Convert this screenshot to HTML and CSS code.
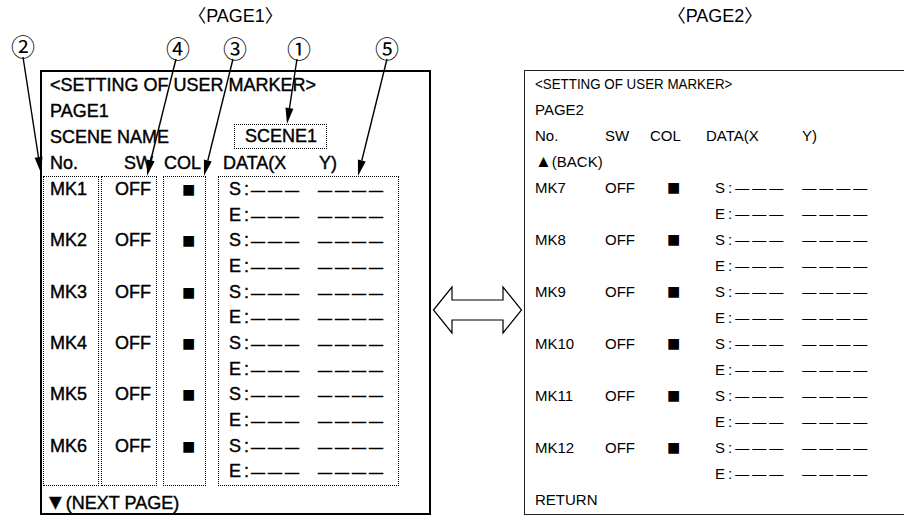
FILE: index.html
```html
<!DOCTYPE html>
<html lang="en">
<head>
<meta charset="utf-8">
<title>Setting of user marker</title>
<link rel="stylesheet" href="styles.css">
</head>
<body>
<div class="stage">
  <div class="titles">
    <div class="title t1"><span class="br">〈</span>PAGE1<span class="br">〉</span></div>
    <div class="title t2"><span class="br">〈</span>PAGE2<span class="br">〉</span></div>
  </div>

  <div class="screens">
    <div class="panel p1">
      <div class="line">&lt;SETTING OF USER MARKER&gt;</div>
      <div class="line">PAGE1</div>
      <div class="line scene"><span class="scene-label">SCENE NAME</span><span class="scene-box">SCENE1</span></div>
      <div class="line head1"><span class="h-no">No.</span><span class="h-sw">SW</span><span class="h-col">COL</span><span class="h-data">DATA(X</span><span>Y)</span></div>
      <div class="cols">
        <div class="col c-no">
          <div class="cell">MK1</div><div class="cell"></div>
          <div class="cell">MK2</div><div class="cell"></div>
          <div class="cell">MK3</div><div class="cell"></div>
          <div class="cell">MK4</div><div class="cell"></div>
          <div class="cell">MK5</div><div class="cell"></div>
          <div class="cell">MK6</div><div class="cell"></div>
        </div>
        <div class="col c-sw">
          <div class="cell">OFF</div><div class="cell"></div>
          <div class="cell">OFF</div><div class="cell"></div>
          <div class="cell">OFF</div><div class="cell"></div>
          <div class="cell">OFF</div><div class="cell"></div>
          <div class="cell">OFF</div><div class="cell"></div>
          <div class="cell">OFF</div><div class="cell"></div>
        </div>
        <div class="col c-col">
          <div class="cell"><span class="sq">■</span></div><div class="cell"></div>
          <div class="cell"><span class="sq">■</span></div><div class="cell"></div>
          <div class="cell"><span class="sq">■</span></div><div class="cell"></div>
          <div class="cell"><span class="sq">■</span></div><div class="cell"></div>
          <div class="cell"><span class="sq">■</span></div><div class="cell"></div>
          <div class="cell"><span class="sq">■</span></div><div class="cell"></div>
        </div>
        <div class="col c-data">
          <div class="cell"><span class="k">S</span><span class="cl">:</span><span class="dash">———</span><span class="dash g2">————</span></div>
          <div class="cell"><span class="k">E</span><span class="cl">:</span><span class="dash">———</span><span class="dash g2">————</span></div>
          <div class="cell"><span class="k">S</span><span class="cl">:</span><span class="dash">———</span><span class="dash g2">————</span></div>
          <div class="cell"><span class="k">E</span><span class="cl">:</span><span class="dash">———</span><span class="dash g2">————</span></div>
          <div class="cell"><span class="k">S</span><span class="cl">:</span><span class="dash">———</span><span class="dash g2">————</span></div>
          <div class="cell"><span class="k">E</span><span class="cl">:</span><span class="dash">———</span><span class="dash g2">————</span></div>
          <div class="cell"><span class="k">S</span><span class="cl">:</span><span class="dash">———</span><span class="dash g2">————</span></div>
          <div class="cell"><span class="k">E</span><span class="cl">:</span><span class="dash">———</span><span class="dash g2">————</span></div>
          <div class="cell"><span class="k">S</span><span class="cl">:</span><span class="dash">———</span><span class="dash g2">————</span></div>
          <div class="cell"><span class="k">E</span><span class="cl">:</span><span class="dash">———</span><span class="dash g2">————</span></div>
          <div class="cell"><span class="k">S</span><span class="cl">:</span><span class="dash">———</span><span class="dash g2">————</span></div>
          <div class="cell"><span class="k">E</span><span class="cl">:</span><span class="dash">———</span><span class="dash g2">————</span></div>
        </div>
      </div>
      <div class="line foot"><span class="tri">▼</span>(NEXT PAGE)</div>
    </div>

    <svg class="swap" viewBox="0 0 93 445" width="93" height="445" aria-hidden="true">
      <path d="M2.5 240 L21 217 L21 230 L72 230 L72 217 L90.5 240 L72 263 L72 250 L21 250 L21 263 Z" fill="#fff" stroke="#000" stroke-width="1.2" stroke-linejoin="miter"/>
    </svg>

    <div class="panel p2">
      <div class="line"><span class="ttl2">&lt;SETTING OF USER MARKER&gt;</span></div>
      <div class="line">PAGE2</div>
      <div class="line row2 hdr2"><span class="r-a">No.</span><span class="r-b">SW</span><span class="r-h">COL</span><span class="r-d">DATA(X</span><span>Y)</span></div>
      <div class="line"><span class="tri2">▲</span>(BACK)</div>
      <div class="line row2"><span class="r-a">MK7</span><span class="r-b">OFF</span><span class="r-c"><span class="sq">■</span></span><span class="k">S</span><span class="cl">:</span><span class="dash">———</span><span class="dash g2">————</span></div>
      <div class="line row2"><span class="r-a"></span><span class="r-b"></span><span class="r-c"></span><span class="k">E</span><span class="cl">:</span><span class="dash">———</span><span class="dash g2">————</span></div>
      <div class="line row2"><span class="r-a">MK8</span><span class="r-b">OFF</span><span class="r-c"><span class="sq">■</span></span><span class="k">S</span><span class="cl">:</span><span class="dash">———</span><span class="dash g2">————</span></div>
      <div class="line row2"><span class="r-a"></span><span class="r-b"></span><span class="r-c"></span><span class="k">E</span><span class="cl">:</span><span class="dash">———</span><span class="dash g2">————</span></div>
      <div class="line row2"><span class="r-a">MK9</span><span class="r-b">OFF</span><span class="r-c"><span class="sq">■</span></span><span class="k">S</span><span class="cl">:</span><span class="dash">———</span><span class="dash g2">————</span></div>
      <div class="line row2"><span class="r-a"></span><span class="r-b"></span><span class="r-c"></span><span class="k">E</span><span class="cl">:</span><span class="dash">———</span><span class="dash g2">————</span></div>
      <div class="line row2"><span class="r-a">MK10</span><span class="r-b">OFF</span><span class="r-c"><span class="sq">■</span></span><span class="k">S</span><span class="cl">:</span><span class="dash">———</span><span class="dash g2">————</span></div>
      <div class="line row2"><span class="r-a"></span><span class="r-b"></span><span class="r-c"></span><span class="k">E</span><span class="cl">:</span><span class="dash">———</span><span class="dash g2">————</span></div>
      <div class="line row2"><span class="r-a">MK11</span><span class="r-b">OFF</span><span class="r-c"><span class="sq">■</span></span><span class="k">S</span><span class="cl">:</span><span class="dash">———</span><span class="dash g2">————</span></div>
      <div class="line row2"><span class="r-a"></span><span class="r-b"></span><span class="r-c"></span><span class="k">E</span><span class="cl">:</span><span class="dash">———</span><span class="dash g2">————</span></div>
      <div class="line row2"><span class="r-a">MK12</span><span class="r-b">OFF</span><span class="r-c"><span class="sq">■</span></span><span class="k">S</span><span class="cl">:</span><span class="dash">———</span><span class="dash g2">————</span></div>
      <div class="line row2"><span class="r-a"></span><span class="r-b"></span><span class="r-c"></span><span class="k">E</span><span class="cl">:</span><span class="dash">———</span><span class="dash g2">————</span></div>
      <div class="line">RETURN</div>
    </div>
  </div>

  <svg class="annot" viewBox="0 0 904 518" width="904" height="518">
    <g class="nums">
      <text x="23" y="45">②</text>
      <text x="178" y="47">④</text>
      <text x="235" y="47">③</text>
      <text x="299" y="47">①</text>
      <text x="387" y="47">⑤</text>
    </g>
    <g stroke="#000" stroke-width="1.4" fill="none">
      <line x1="23" y1="57" x2="38.5" y2="157.5"/>
      <line x1="176" y1="59" x2="150.7" y2="160.5"/>
      <line x1="233" y1="59" x2="207.8" y2="160.5"/>
      <line x1="297" y1="59" x2="289.4" y2="108.5"/>
      <line x1="387" y1="59" x2="361.8" y2="160.5"/>
    </g>
    <g fill="#000">
      <polygon points="41,173 42.5,156.6 34.6,157.8"/>
      <polygon points="147,176 154.6,161.3 146.8,159.5"/>
      <polygon points="204,176 211.7,161.5 203.9,159.5"/>
      <polygon points="287,124 293.4,108.8 285.5,107.6"/>
      <polygon points="358,176 365.7,161.5 357.9,159.5"/>
    </g>
  </svg>
</div>
</body>
</html>
```

FILE: styles.css
```css
* {
  box-sizing: border-box;
  margin: 0;
  padding: 0;
}

html,
body {
  width: 904px;
  height: 518px;
  overflow: hidden;
  background: #fff;
}

body {
  font-family: "Liberation Sans", Arial, sans-serif;
  color: #000;
}

.stage {
  position: relative;
  width: 904px;
  height: 518px;
  overflow: hidden;
}

/* page captions */
.titles {
  display: flex;
  height: 70px;
  padding-top: 3px;
}

.title {
  flex: none;
  font-size: 18px;
  line-height: 22px;
  text-align: center;
  white-space: nowrap;
}

.t1 {
  margin-left: 40px;
  width: 391px;
}

.t2 {
  margin-left: 93px;
  width: 382px;
}

.br {
  font-family: "Noto Sans CJK JP", sans-serif;
}

/* the two screens */
.screens {
  display: flex;
  align-items: flex-start;
}

.panel {
  flex: none;
  height: 445px;
}

.p1 {
  margin-left: 40px;
  width: 391px;
  border: 2px solid #000;
  font-size: 18px;
  -webkit-text-stroke: 0.4px #000;
}

.swap {
  flex: none;
  display: block;
}

.p2 {
  width: 382px;
  border: 1px solid #222;
  font-size: 15px;
  padding-left: 10px;
}

.line {
  height: 26px;
  line-height: 26px;
  white-space: nowrap;
}

.p1 > .line {
  padding-left: 8px;
}

/* scene name row */
.scene {
  display: flex;
  align-items: center;
}

.scene-label {
  width: 184px;
  flex: none;
}

.scene-box {
  display: inline-block;
  width: 93px;
  height: 25px;
  line-height: 23px;
  border: 1px dotted #000;
  padding-left: 10px;
  margin-top: -1px;
}

/* left header */
.head1 {
  display: flex;
}

.h-no { width: 74px; flex: none; }
.h-sw { width: 40px; flex: none; }
.h-col { width: 59px; flex: none; }
.h-data { width: 96px; flex: none; }

/* dotted columns */
.cols {
  display: flex;
  margin-left: 1px;
  align-items: stretch;
}

.col {
  flex: none;
  border: 1px dotted #000;
}

.c-no {
  width: 56px;
  padding-left: 6px;
}

.c-sw {
  width: 56px;
  margin-left: 2px;
  padding-left: 13px;
}

.c-col {
  width: 43px;
  margin-left: 6px;
  padding-left: 18px;
}

.c-data {
  width: 181px;
  margin-left: 12px;
  padding-left: 10px;
}

.cell {
  height: 25.67px;
  line-height: 25.67px;
  white-space: nowrap;
}

.sq {
  font-size: 22px;
  -webkit-text-stroke: 0;
}

.cl {
  margin-left: 3px;
  margin-right: 2px;
}

.dash {
  font-size: 14px;
  letter-spacing: 3px;
  -webkit-text-stroke: 0.5px #000;
}

.g2 {
  margin-left: 16px;
}

.foot {
  margin-top: 4px;
}

.p1 > .foot {
  padding-left: 3px;
}

.tri {
  font-size: 21px;
  line-height: 20px;
}

/* right screen */
.ttl2 {
  display: inline-block;
  transform: scaleX(0.89);
  transform-origin: left center;
}

.row2 {
  display: flex;
}

.r-a { width: 70px; flex: none; }
.r-b { width: 62px; flex: none; }
.r-c { width: 48px; flex: none; }
.r-h { width: 56px; flex: none; }
.r-d { width: 96px; flex: none; }

.hdr2 .r-b {
  width: 45px;
}

.p2 .cl {
  margin-left: 3px;
  margin-right: 3px;
}

.p2 .dash {
  font-size: 14px;
  letter-spacing: 3px;
  -webkit-text-stroke: 0.2px #000;
}

.p2 .g2 {
  margin-left: 16px;
}

.tri2 {
  font-size: 17px;
  line-height: 20px;
}

/* annotation overlay */
.annot {
  position: absolute;
  left: 0;
  top: 0;
  pointer-events: none;
}

.nums text {
  font-family: "Noto Sans CJK JP", sans-serif;
  font-size: 24px;
  text-anchor: middle;
  dominant-baseline: central;
}
```
